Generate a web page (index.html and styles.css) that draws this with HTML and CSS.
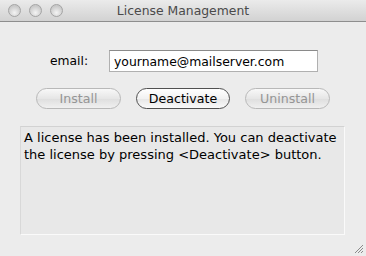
FILE: index.html
```html
<!DOCTYPE html>
<html lang="en">
<head>
  <meta charset="UTF-8">
  <title>License Management</title>
  <link rel="stylesheet" href="styles.css">
</head>
<body>
  <div class="window">
    <!-- Title bar -->
    <div class="titlebar">
      <div class="lights">
        <span class="light"></span>
        <span class="light"></span>
        <span class="light"></span>
      </div>
      <div class="title">License Management</div>
    </div>

    <div class="content">
      <div class="email-row">
        <label for="email">email:</label>
        <input type="text" id="email" value="yourname@mailserver.com">
      </div>

      <div class="buttons">
        <button class="btn" disabled>Install</button>
        <button class="btn active">Deactivate</button>
        <button class="btn" disabled>Uninstall</button>
      </div>

      <div class="message">A license has been installed. You can deactivate the license by pressing &lt;Deactivate&gt; button.</div>
    </div>

    <svg class="grip" width="12" height="12" viewBox="0 0 12 12">
      <path d="M11 3 L3 11 M11 6 L6 11 M11 9 L9 11" stroke="#8a8a8a" stroke-width="1"/>
    </svg>
  </div>
</body>
</html>
```

FILE: styles.css
```css
* {
  margin: 0;
  padding: 0;
  box-sizing: border-box;
}

body {
  font-family: 'DejaVu Sans', 'Liberation Sans', sans-serif;
  background: #ececec;
  width: 366px;
  height: 256px;
  overflow: hidden;
}

.window {
  position: relative;
  width: 366px;
  height: 256px;
  background: #ececec;
}

.titlebar {
  height: 22px;
  background: linear-gradient(#ebebeb, #d2d2d2);
  border-bottom: 1px solid #8e8e8e;
  display: flex;
  align-items: center;
  position: relative;
}

.lights {
  display: flex;
  gap: 8px;
  padding-left: 8px;
}

.light {
  width: 13px;
  height: 13px;
  border-radius: 50%;
  background: radial-gradient(circle at 50% 70%, #f4f4f4, #c9c9c9 70%);
  border: 1px solid #a4a4a4;
}

.title {
  position: absolute;
  left: 0;
  right: 0;
  text-align: center;
  font-size: 12.4px;
  color: #4a4a4a;
  top: 3px;
}

.content {
  padding: 28px 20px 0 20px;
}

.email-row {
  display: flex;
  align-items: center;
  height: 22px;
  padding-left: 30px;
}

.email-row label {
  font-size: 12.3px;
  color: #000;
  width: 59px;
}

.email-row input {
  width: 209px;
  height: 22px;
  border: 1px solid #b0b0b0;
  border-top-color: #8a8a8a;
  background: #fff;
  font-family: inherit;
  font-size: 12.4px;
  padding: 1px 4px 0;
  color: #000;
  outline: none;
}

.buttons {
  display: flex;
  gap: 15px;
  margin-top: 16px;
  padding-left: 16px;
}

.btn {
  width: 85px;
  height: 21px;
  border-radius: 11px;
  border: 1px solid #b8b8b8;
  background: linear-gradient(#f8f8f8, #e6e6e6 50%, #dedede 51%, #f0f0f0);
  font-family: inherit;
  font-size: 12.6px;
  color: #959595;
}

.btn.active {
  width: 94px;
  border-color: #505050;
  color: #000;
  background: linear-gradient(#ffffff, #f2f2f2 50%, #e6e6e6 51%, #fafafa);
}

.message {
  margin-top: 17px;
  width: 325px;
  height: 109px;
  background: #e8e8e8;
  border: 1px solid #fafafa;
  border-top-color: #d2d2d2;
  border-left-color: #d8d8d8;
  font-size: 13px;
  line-height: 17px;
  padding: 2px 3px;
  color: #000;
}

.grip {
  position: absolute;
  right: 2px;
  bottom: 2px;
}
```
